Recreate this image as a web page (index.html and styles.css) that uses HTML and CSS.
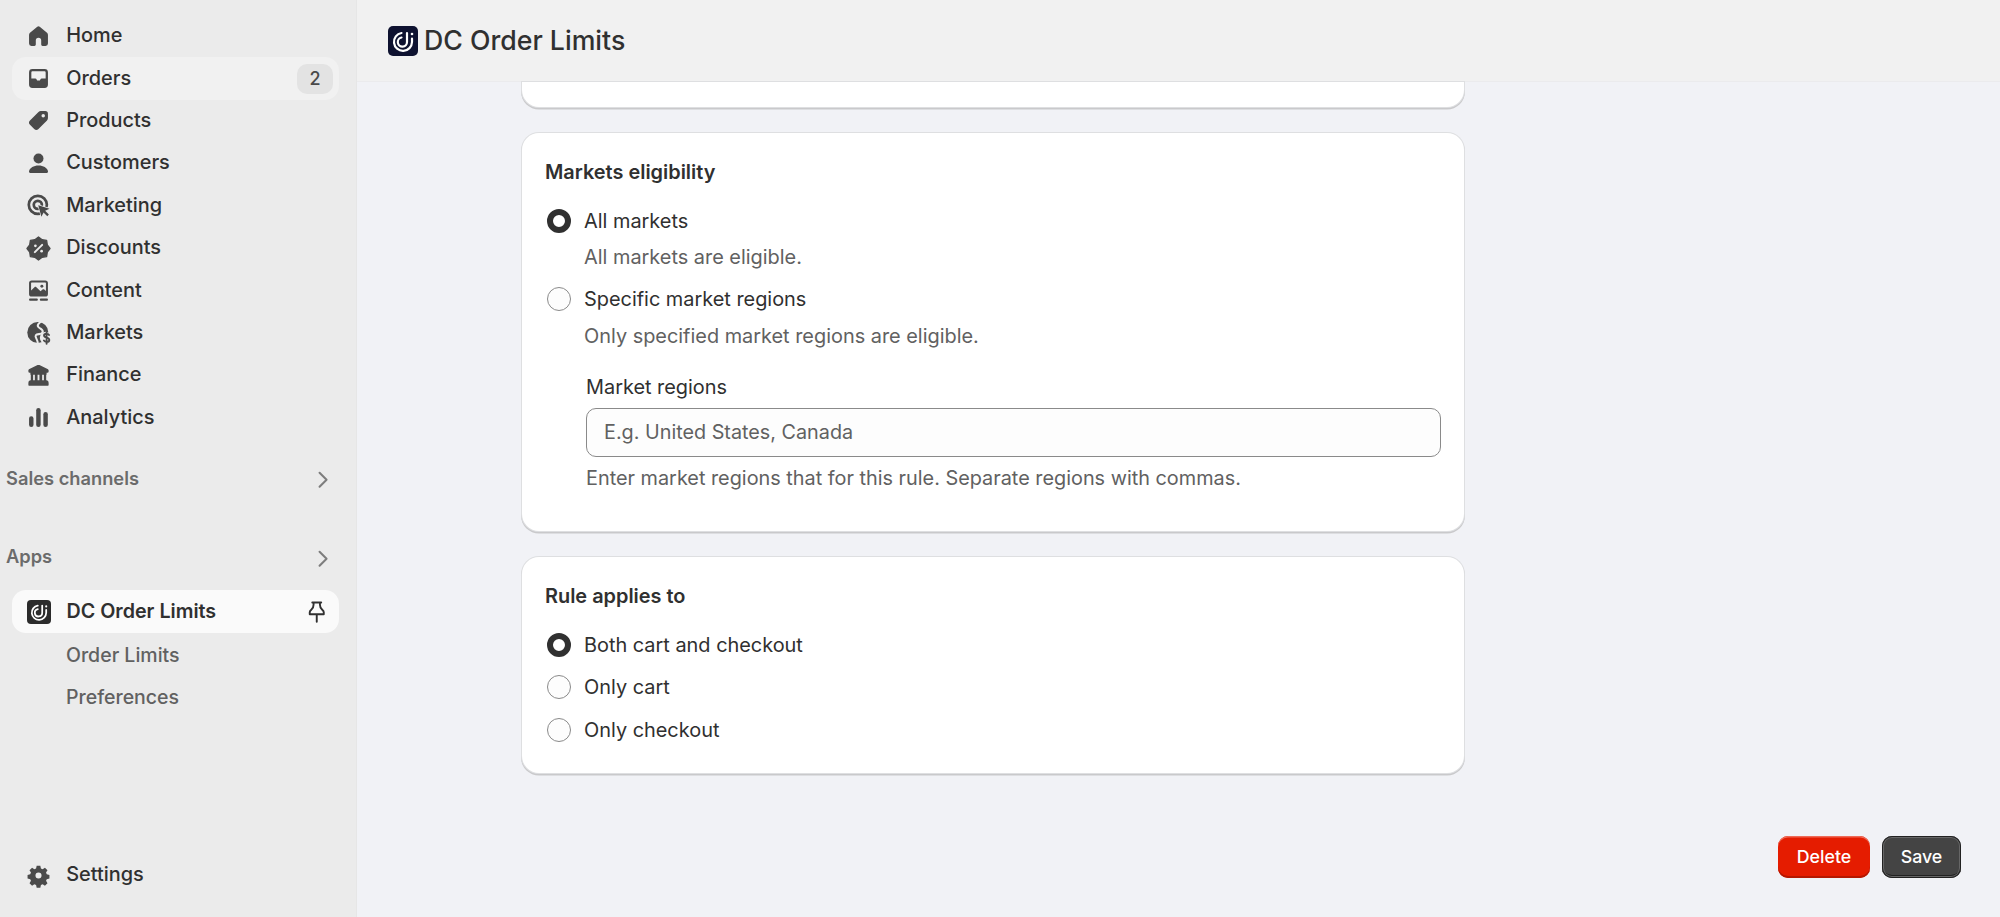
FILE: index.html
```html
<!DOCTYPE html>
<html lang="en">
<head>
<meta charset="utf-8">
<title>DC Order Limits</title>
<link rel="stylesheet" href="styles.css">
</head>
<body>
<aside class="sidebar">
  <nav class="nav-main">
    <a class="nav-item"><svg class="nav-icon" viewBox="0 0 20 20"><path d="M9.100 2.700 3.700 7.300A2 2 0 0 0 3 8.900v6.300A1.800 1.800 0 0 0 4.800 17H7a1 1 0 0 0 1-1v-3a2 2 0 0 1 4 0v3a1 1 0 0 0 1 1h2.200a1.800 1.800 0 0 0 1.800-1.800V8.900a2 2 0 0 0-.7-1.600l-5.400-4.600a1.400 1.400 0 0 0-1.800 0z"/></svg><span>Home</span></a>
    <a class="nav-item nav-hover"><svg class="nav-icon" viewBox="0 0 20 20"><path fill-rule="evenodd" d="M5.500 3h9A2.500 2.500 0 0 1 17 5.500v9a2.500 2.500 0 0 1-2.500 2.500h-9A2.500 2.500 0 0 1 3 14.500v-9A2.500 2.500 0 0 1 5.500 3zm0 1.700a.8.8 0 0 0-.8.800V10h2.900c.5 0 .8.300 1 .7l.4.800h2l.4-.8c.2-.4.500-.7 1-.7h2.900V5.500a.8.8 0 0 0-.8-.8z"/></svg><span>Orders</span><b class="badge">2</b></a>
    <a class="nav-item"><svg class="nav-icon" viewBox="0 0 20 20"><path fill-rule="evenodd" d="M11.800 3H15a2 2 0 0 1 2 2v3.200a2.500 2.500 0 0 1-.7 1.800l-6.300 6.300a2.300 2.300 0 0 1-3.200 0l-3.100-3.100a2.300 2.300 0 0 1 0-3.200L10 3.700A2.500 2.500 0 0 1 11.800 3zM13.500 5.200a1.300 1.300 0 1 0 0 2.600 1.300 1.300 0 0 0 0-2.600z"/></svg><span>Products</span></a>
    <a class="nav-item"><svg class="nav-icon" viewBox="0 0 20 20"><circle cx="10" cy="6.300" r="3.700"/><path d="M10 11.500c-3.700 0-6.300 1.800-7 4-.3 1 .5 1.500 1.300 1.500h11.400c.8 0 1.600-.5 1.300-1.500-.7-2.200-3.300-4-7-4z"/></svg><span>Customers</span></a>
    <a class="nav-item"><svg class="nav-icon" viewBox="0 0 20 20"><circle class="ring" cx="9.500" cy="9.500" r="6.700"/><circle class="ring" cx="9.500" cy="9.500" r="3"/><path class="cursor" d="M9.800 9.800l8.400 2.600-3.300 1.500 2.800 2.800-1.200 1.200-2.800-2.800-1.500 3.300z"/></svg><span>Marketing</span></a>
    <a class="nav-item"><svg class="nav-icon" viewBox="0 0 20 20"><polygon class="burst" points="18.500,10 16.500,12.700 16,16 12.700,16.500 10,18.500 7.300,16.500 4,16 3.500,12.700 1.500,10 3.500,7.300 4,4 7.300,3.500 10,1.500 12.700,3.500 16,4 16.500,7.300"/><path class="cut" d="M7.300 12.700l5.400-5.400"/><circle class="cut-dot" cx="7.700" cy="8" r="1"/><circle class="cut-dot" cx="12.300" cy="12" r="1"/></svg><span>Discounts</span></a>
    <a class="nav-item"><svg class="nav-icon" viewBox="0 0 20 20"><path fill-rule="evenodd" d="M5 2.500h10A2 2 0 0 1 17 4.500v8a2 2 0 0 1-2 2H5a2 2 0 0 1-2-2v-8a2 2 0 0 1 2-2zm0 1.500a.5.5 0 0 0-.5.5V10l2.500-2.500c.4-.4 1-.4 1.400 0l3.100 3 1.500-1.200c.4-.3.900-.3 1.300 0l1.200 1V4.500A.5.5 0 0 0 15 4z"/><circle cx="12.500" cy="6.800" r="1.100"/><rect x="3" y="16" width="6.500" height="1.500" rx=".7"/><rect x="11" y="16" width="6" height="1.500" rx=".7"/></svg><span>Content</span></a>
    <a class="nav-item"><svg class="nav-icon" viewBox="0 0 20 20"><circle cx="9.500" cy="10" r="7.800"/><path class="cut" d="M13 1.500c-2.500 1-4.500 3-3 4.500s4 2 3 4-4 .5-5 2 1.500 3 1.500 6"/><circle class="halo" cx="15.500" cy="14" r="4.500"/><path class="dollar" d="M17.800 11.800c-.4-.6-1.100-.9-1.800-.9-1 0-1.900.5-1.900 1.400 0 2 3.900 1.100 3.900 3.200 0 1-.9 1.500-1.900 1.500s-1.700-.4-2.100-1M16 9.700v8.600"/></svg><span>Markets</span></a>
    <a class="nav-item"><svg class="nav-icon" viewBox="0 0 20 20"><path fill-rule="evenodd" d="M9.300 2.300c.4-.2 1-.2 1.400 0l6 2.800c.5.200.8.700.8 1.200V7a1 1 0 0 1-1 1h-.5v1.500h-.3v4h.3a1.800 1.800 0 0 1 1.500 1.800V17a.5.5 0 0 1-.5.500H3a.5.5 0 0 1-.5-.5v-1.700A1.800 1.800 0 0 1 4 13.500h.3v-4H4V8h-.5a1 1 0 0 1-1-1v-.7c0-.5.300-1 .8-1.200zM6 9.500v4h1.300v-4zm3.300 0v4h1.400v-4zm3.400 0v4H14v-4z"/></svg><span>Finance</span></a>
    <a class="nav-item"><svg class="nav-icon" viewBox="0 0 20 20"><rect x="3" y="9" width="3.300" height="8" rx="1.650"/><rect x="8.300" y="3" width="3.300" height="14" rx="1.650"/><rect x="13.600" y="6" width="3.300" height="11" rx="1.650"/></svg><span>Analytics</span></a>
  </nav>
  <div class="nav-section nav-section-first"><span>Sales channels</span><svg class="chevron" viewBox="0 0 20 20"><path d="M7.500 4.500 13 10l-5.500 5.500"/></svg></div>
  <div class="nav-section nav-section-second"><span>Apps</span><svg class="chevron" viewBox="0 0 20 20"><path d="M7.500 4.500 13 10l-5.500 5.500"/></svg></div>
  <a class="nav-item nav-active">
    <svg class="nav-logo" viewBox="0 0 30 30"><rect width="30" height="30" rx="5" fill="#2b2b2b"/><use href="#logo-mark"/></svg>
    <span>DC Order Limits</span>
    <svg class="pin" viewBox="0 0 20 20"><path d="M6.500 2.700h7M7.500 2.700v1.800c0 1.800-.6 3-1.800 4-.7.600-1.200 1.100-1.200 1.900v1.600h11v-1.600c0-.8-.5-1.300-1.200-1.900-1.200-1-1.800-2.200-1.800-4V2.700M10 12v5.800"/></svg>
  </a>
  <a class="nav-item nav-sub"><span>Order Limits</span></a>
  <a class="nav-item nav-sub"><span>Preferences</span></a>
  <a class="nav-item nav-settings"><svg class="nav-icon" viewBox="0 0 20 20"><path fill-rule="evenodd" d="M8.500 2h3l.5 2.200 1.400.6 1.900-1.200 2.100 2.100-1.200 1.900.6 1.400 2.200.5v3l-2.200.5-.6 1.400 1.200 1.900-2.100 2.100-1.900-1.200-1.400.6-.5 2.200h-3L8 17.800l-1.400-.6-1.900 1.200-2.100-2.100 1.200-1.900-.6-1.400-2.200-.5v-3l2.200-.5.6-1.400-1.200-1.900 2.100-2.100 1.900 1.200L8 4.200zM10 7.500a2.500 2.500 0 1 0 0 5 2.500 2.500 0 0 0 0-5z" transform="translate(1 1) scale(.9)"/></svg><span>Settings</span></a>
</aside>

<svg class="defs" width="0" height="0"><defs>
  <g id="logo-mark" fill="none" stroke="#fff" stroke-width="2.200" stroke-linecap="round">
    <path d="M13.500 7a9 9 0 1 0 10.500 9v-3.500"/>
    <path d="M13.500 11.500a4.600 4.600 0 1 0 5.500 4.500V7"/>
    <circle cx="24" cy="8" r="1.300" fill="#fff" stroke="none"/>
  </g>
</defs></svg>

<div class="main">
  <header class="topbar">
    <svg class="top-logo" viewBox="0 0 30 30"><rect width="30" height="30" rx="5" fill="#0e1230"/><use href="#logo-mark"/></svg>
    <h1>DC Order Limits</h1>
  </header>
  <div class="content">
    <div class="stack">
      <div class="card card-cut"></div>
      <section class="card card-markets">
        <h2>Markets eligibility</h2>
        <label class="radio"><i class="dot on"></i>All markets</label>
        <p class="radio-help help-a">All markets are eligible.</p>
        <label class="radio radio-b"><i class="dot"></i>Specific market regions</label>
        <p class="radio-help help-b">Only specified market regions are eligible.</p>
        <div class="field">
          <label class="field-label">Market regions</label>
          <div class="input">E.g. United States, Canada</div>
          <p class="field-help">Enter market regions that for this rule. Separate regions with commas.</p>
        </div>
      </section>
      <section class="card card-rule">
        <h2>Rule applies to</h2>
        <label class="radio"><i class="dot on"></i>Both cart and checkout</label>
        <label class="radio radio-next"><i class="dot"></i>Only cart</label>
        <label class="radio radio-next"><i class="dot"></i>Only checkout</label>
      </section>
    </div>
    <div class="actions">
      <button class="btn btn-delete">Delete</button>
      <button class="btn btn-save">Save</button>
    </div>
  </div>
</div>
</body>
</html>
```
FILE: styles.css
```css
* { box-sizing: border-box; }
html, body { margin: 0; height: 917px; overflow: hidden; }
body {
  display: flex;
  font-family: Inter, "Liberation Sans", sans-serif;
  font-size: 19.9px;
  color: #303030;
  background: #f1f2f6;
}
h1, h2, p { margin: 0; }

.sidebar {
  width: 357px;
  flex: none;
  height: 917px;
  padding: 15px 0 0 12px;
  background: #ebebeb;
  border-right: 1px solid #e6e6e6;
  display: flex;
  flex-direction: column;
}
.nav-main { display: flex; flex-direction: column; }
.nav-item {
  display: flex;
  align-items: center;
  width: 327px;
  height: 42.4px;
  padding-left: 13px;
  border-radius: 14px;
  font-size: 19.900px;
  font-weight: 500;
  line-height: 1;
  color: #303030;
  flex: none;
}
.nav-item > span { margin-left: 14.200px; }
.nav-hover { background: #f1f1f1; }
.nav-icon { width: 27px; height: 27px; fill: #4a4a4a; flex: none; }
.ring { fill: none; stroke: #4a4a4a; stroke-width: 2; }
.cursor { fill: #4a4a4a; stroke: #ebebeb; stroke-width: 1; paint-order: stroke; }
.burst { stroke: #4a4a4a; stroke-width: 1; stroke-linejoin: round; }
.cut { fill: none; stroke: #ebebeb; stroke-width: 1.500; stroke-linecap: round; }
.cut-dot { fill: #ebebeb; }
.halo { fill: #ebebeb; }
.dollar { fill: none; stroke: #4a4a4a; stroke-width: 1.400; stroke-linecap: round; }
.badge {
  margin-left: auto;
  margin-right: 6px;
  width: 36px;
  height: 30px;
  border-radius: 10px;
  background: #e3e3e3;
  color: #4a4a4a;
  font-size: 18px;
  font-weight: 450;
  display: flex;
  align-items: center;
  justify-content: center;
}
.nav-section {
  display: flex;
  align-items: center;
  justify-content: space-between;
  height: 24px;
  margin-left: -6px;
  width: 329px;
  font-size: 18.300px;
  font-weight: 600;
  color: #6b6b6b;
}
.nav-section-first { margin-top: 27px; }
.nav-section-second { margin-top: 54.500px; }
.chevron { width: 25.5px; height: 25.5px; fill: none; stroke: #7d7d7d; stroke-width: 1.6; stroke-linecap: round; stroke-linejoin: round; margin-top: 4px; }
.nav-active { background: #fafafa; font-weight: 600; font-size: 19.700px; margin-top: 22px; margin-bottom: 1px; padding-left: 15px; height: 43px; }
.nav-active > span { margin-left: 15.500px; }
.nav-logo { width: 24px; height: 24px; flex: none; }
.pin { width: 25.5px; height: 25.5px; margin-left: auto; margin-right: 10px; fill: none; stroke: #303030; stroke-width: 1.500; stroke-linecap: round; stroke-linejoin: round; flex: none; }
.nav-sub { padding-left: 54px; color: #616161; font-size: 19.500px; }
.nav-sub > span { margin-left: 0; }
.nav-settings { margin-top: auto; margin-bottom: 20.500px; }

.defs { position: absolute; }

.main { flex: 1; min-width: 0; display: flex; flex-direction: column; height: 917px; }
.topbar {
  height: 82px;
  flex: none;
  background: #f1f1f1;
  border-bottom: 1px solid #ebebed;
  display: flex;
  align-items: center;
  padding-left: 31px;
}
.top-logo { width: 30px; height: 30px; flex: none; }
h1 { font-size: 26.700px; font-weight: 550; margin-left: 6px; line-height: 1; }

.content { flex: 1; display: flex; flex-direction: column; }
.stack { margin-left: 165px; width: 942px; display: flex; flex-direction: column; gap: 26px; }
.card {
  background: #fff;
  border-radius: 17px;
  box-shadow: 0 0 0 1px #dedfe1, 0 1.5px 0 1px #c9c9cb;
}
.card-cut { height: 25px; border-radius: 0 0 17px 17px; }
.card-markets { height: 398px; padding: 25.500px 23px 0; }
.card-rule { height: 216px; padding: 25.500px 23px 0; }
h2 { font-size: 19.900px; font-weight: 600; line-height: 26px; }

.radio { display: flex; align-items: center; height: 26px; line-height: 26px; font-size: 19.900px; margin-top: 23px; font-weight: 400; }
.dot { width: 24px; height: 24px; border-radius: 50%; border: 1px solid #8a8a8a; background: #fdfdfd; margin: 0 13px 0 2px; flex: none; }
.dot.on { border: 6px solid #303030; background: #fff; }
.radio-help { margin-left: 39px; color: #616161; font-size: 19.900px; line-height: 26px; }
.help-a { margin-top: 10px; }
.radio-b { margin-top: 16px; }
.help-b { margin-top: 11.500px; }
.radio-next { margin-top: 16.500px; }
.field { margin-left: 41px; margin-top: 24.500px; }
.field-label { display: block; line-height: 26px; font-size: 19.900px; }
.input {
  margin-top: 8px;
  height: 49px;
  border: 1px solid #8a8a8a;
  border-radius: 10px;
  background: #fdfdfd;
  padding-left: 17px;
  display: flex;
  align-items: center;
  color: #616161;
  font-size: 19.800px;
}
.field-help { margin-top: 8px; color: #616161; font-size: 19.850px; line-height: 26px; }

.actions { margin-top: auto; margin-bottom: 39px; display: flex; justify-content: flex-end; gap: 12px; padding-right: 39px; }
.btn {
  height: 42px;
  border: 0;
  border-radius: 10px;
  color: #fff;
  font-family: inherit;
  font-size: 17.800px;
  font-weight: 550;
  padding: 0 0 2px;
}
.btn-delete { width: 92px; background: #e51c00; box-shadow: inset 0 1.5px 0 #ef6a57, inset 0 -2px 0 #b51700; }
.btn-save { width: 79px; background: #444; box-shadow: inset 0 0 0 1px #222, inset 0 0 0 2px #666, inset 0 -3px 0 #222; }
```
